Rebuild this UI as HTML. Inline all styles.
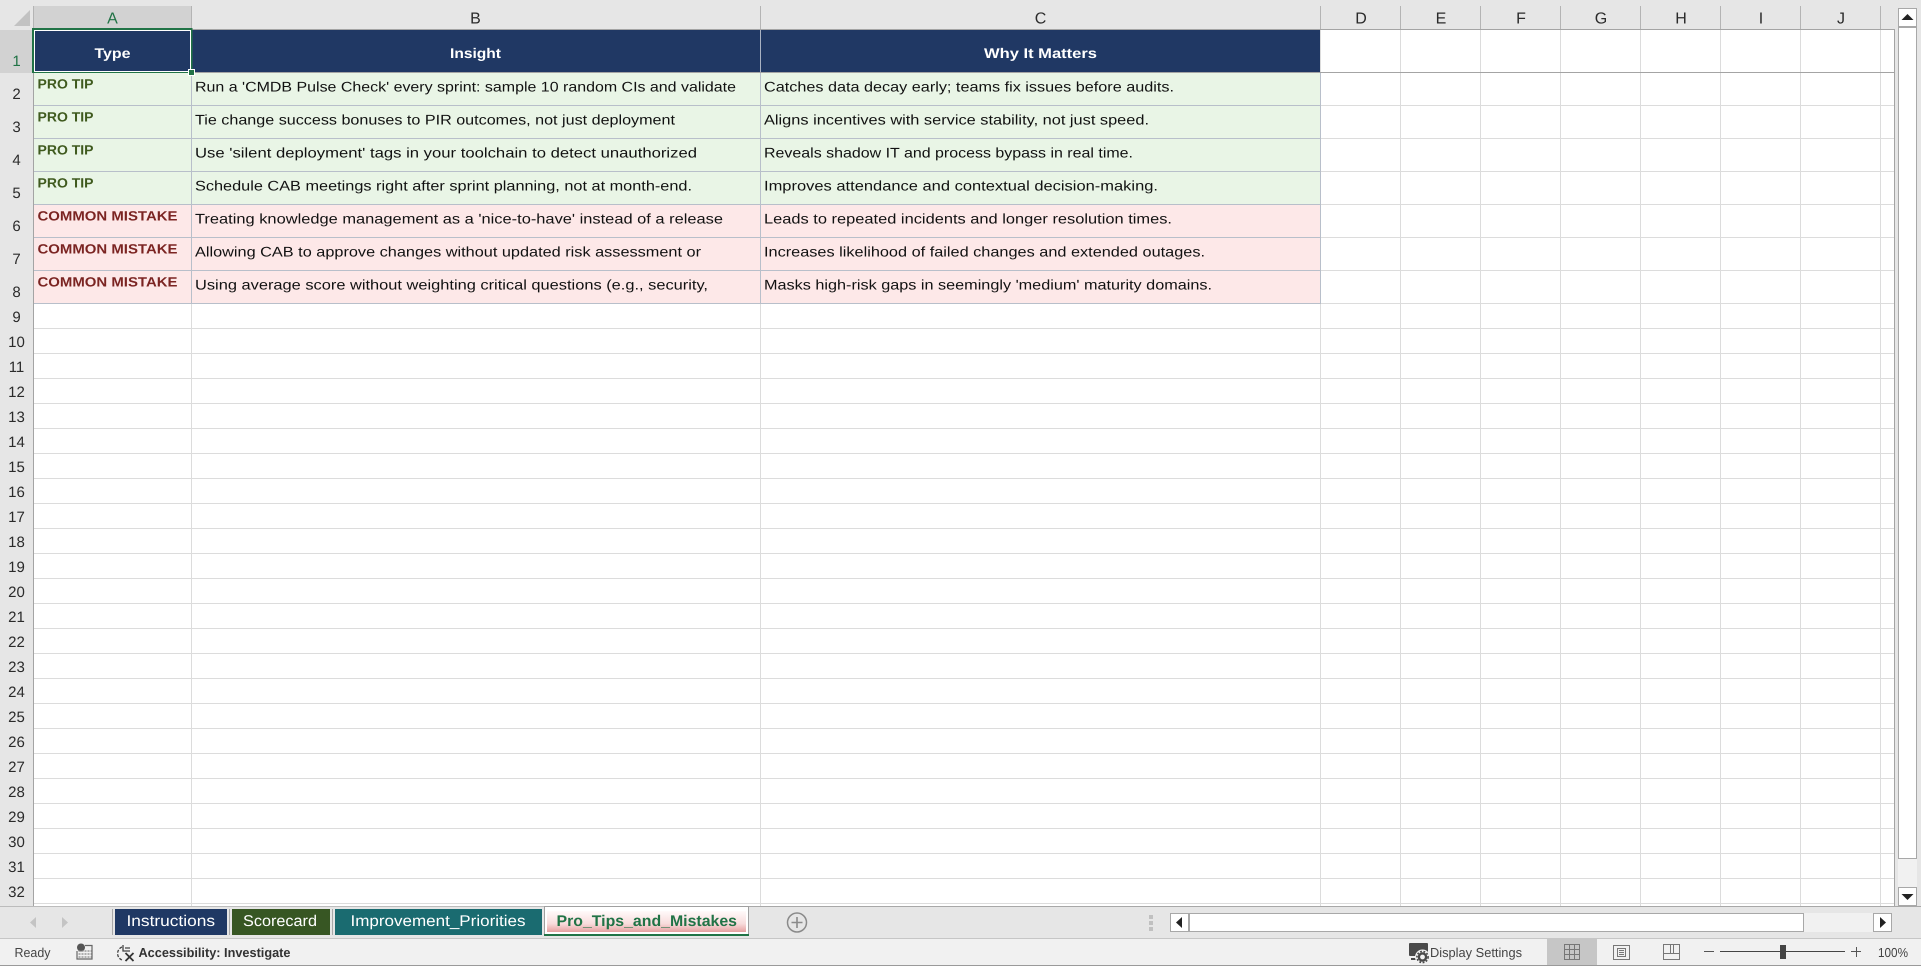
<!DOCTYPE html>
<html lang="en"><head><meta charset="utf-8"><title>Pro_Tips_and_Mistakes</title>
<style>
html,body{margin:0;padding:0;background:#fff;width:1921px;height:966px;overflow:hidden}
svg{display:block}
text{font-family:"Liberation Sans",sans-serif;text-rendering:geometricPrecision}
.h{font-size:14px;font-weight:bold;fill:#fff}
.t{font-size:14px;fill:#111}
.g{font-size:13.5px;font-weight:bold;fill:#3f5a1e}
.m{font-size:13.5px;font-weight:bold;fill:#7b2422}
.r{font-size:15px;fill:#2b2b2b;text-anchor:middle}
.c{font-size:16px;fill:#2b2b2b;text-anchor:middle}
.tab{font-size:15.5px;fill:#fff}
.s{font-size:13px;fill:#444}
</style></head><body>
<svg xmlns="http://www.w3.org/2000/svg" width="1921" height="966" viewBox="0 0 1921 966">
<defs>
<pattern id="hl" patternUnits="userSpaceOnUse" x="0" y="304" width="10" height="25"><rect x="0" y="24" width="10" height="1" fill="#dcdcdc"/></pattern>
<linearGradient id="tg" x1="0" y1="0" x2="0" y2="1"><stop offset="0" stop-color="#fffafa"/><stop offset=".6" stop-color="#f8dcdc"/><stop offset="1" stop-color="#e6a0a0"/></linearGradient>
</defs>
<g shape-rendering="crispEdges">
<rect width="1921" height="966" fill="#fff"/>
<!-- top header -->
<rect x="0" y="0" width="1921" height="29" fill="#e6e6e6"/>
<rect x="0" y="29" width="33" height="878" fill="#e6e6e6"/>
<rect x="33" y="6" width="159" height="23" fill="#d2d2d2"/>
<rect x="0" y="30" width="33" height="43" fill="#d2d2d2"/>
<!-- column ticks -->
<g fill="#b4b4b4">
<rect x="33" y="6" width="1" height="23"/><rect x="191" y="6" width="1" height="23"/><rect x="760" y="6" width="1" height="23"/>
<rect x="1320" y="6" width="1" height="23"/><rect x="1400" y="6" width="1" height="23"/><rect x="1480" y="6" width="1" height="23"/>
<rect x="1560" y="6" width="1" height="23"/><rect x="1640" y="6" width="1" height="23"/><rect x="1720" y="6" width="1" height="23"/>
<rect x="1800" y="6" width="1" height="23"/><rect x="1880" y="6" width="1" height="23"/>
</g>
<!-- white grid lines -->
<rect x="34" y="304" width="1860" height="600" fill="url(#hl)"/>
<g fill="#dcdcdc">
<rect x="1321" y="105" width="573" height="1"/><rect x="1321" y="138" width="573" height="1"/><rect x="1321" y="171" width="573" height="1"/>
<rect x="1321" y="204" width="573" height="1"/><rect x="1321" y="237" width="573" height="1"/><rect x="1321" y="270" width="573" height="1"/><rect x="1321" y="303" width="573" height="1"/>
<rect x="191" y="304" width="1" height="603"/><rect x="760" y="304" width="1" height="603"/>
<rect x="1320" y="30" width="1" height="877"/><rect x="1400" y="30" width="1" height="877"/><rect x="1480" y="30" width="1" height="877"/>
<rect x="1560" y="30" width="1" height="877"/><rect x="1640" y="30" width="1" height="877"/><rect x="1720" y="30" width="1" height="877"/>
<rect x="1800" y="30" width="1" height="877"/><rect x="1880" y="30" width="1" height="877"/>
</g>
<!-- filled cells -->
<rect x="34" y="30" width="1286" height="42" fill="#203864"/>
<rect x="34" y="73" width="1286" height="131" fill="#e9f5e6"/>
<rect x="34" y="205" width="1286" height="98" fill="#fde8e8"/>
<g fill="#b8bfca">
<rect x="34" y="105" width="1287" height="1"/><rect x="34" y="138" width="1287" height="1"/><rect x="34" y="171" width="1287" height="1"/>
<rect x="34" y="204" width="1287" height="1"/><rect x="34" y="237" width="1287" height="1"/><rect x="34" y="270" width="1287" height="1"/><rect x="34" y="303" width="1287" height="1"/>
<rect x="191" y="73" width="1" height="231"/><rect x="760" y="73" width="1" height="231"/><rect x="1320" y="73" width="1" height="231"/>
</g>
<rect x="760" y="30" width="1" height="42" fill="#a9b2c2"/><rect x="191" y="30" width="1" height="42" fill="#a9b2c2"/>
<!-- pane borders -->
<g fill="#a4a4a4">
<rect x="33" y="29" width="1861" height="1"/>
<rect x="33" y="72" width="1861" height="1"/>
<rect x="33" y="29" width="1" height="878"/>
<rect x="1894" y="29" width="1" height="878"/>
</g>
<!-- selection -->
<rect x="33" y="29" width="158.5" height="43" fill="none" stroke="#217346" stroke-width="2"/>
<rect x="34.5" y="30.5" width="156" height="41" fill="none" stroke="#fff" stroke-width="1"/>
<rect x="188" y="69" width="7" height="7" fill="#fff"/><rect x="189" y="70" width="5" height="5" fill="#217346"/>
</g>
<polygon points="30,10 30,26 14,26" fill="#c2c2c2"/>
<!-- column letters -->
<text class="c" x="112.5" y="23.5" style="fill:#217346">A</text>
<text class="c" x="475.5" y="23.5">B</text><text class="c" x="1040.5" y="23.5">C</text><text class="c" x="1361" y="23.5">D</text><text class="c" x="1441" y="23.5">E</text>
<text class="c" x="1521" y="23.5">F</text><text class="c" x="1601" y="23.5">G</text><text class="c" x="1681" y="23.5">H</text><text class="c" x="1761" y="23.5">I</text><text class="c" x="1841" y="23.5">J</text>
<!-- row numbers -->
<text class="r" x="16.5" y="66" style="fill:#217346">1</text>
<text class="r" x="16.5" y="99">2</text><text class="r" x="16.5" y="132">3</text><text class="r" x="16.5" y="165">4</text><text class="r" x="16.5" y="198">5</text>
<text class="r" x="16.5" y="231">6</text><text class="r" x="16.5" y="264">7</text><text class="r" x="16.5" y="297">8</text>
<text class="r" x="16.5" y="322">9</text><text class="r" x="16.5" y="347">10</text><text class="r" x="16.5" y="372">11</text><text class="r" x="16.5" y="397">12</text>
<text class="r" x="16.5" y="422">13</text><text class="r" x="16.5" y="447">14</text><text class="r" x="16.5" y="472">15</text><text class="r" x="16.5" y="497">16</text>
<text class="r" x="16.5" y="522">17</text><text class="r" x="16.5" y="547">18</text><text class="r" x="16.5" y="572">19</text><text class="r" x="16.5" y="597">20</text>
<text class="r" x="16.5" y="622">21</text><text class="r" x="16.5" y="647">22</text><text class="r" x="16.5" y="672">23</text><text class="r" x="16.5" y="697">24</text>
<text class="r" x="16.5" y="722">25</text><text class="r" x="16.5" y="747">26</text><text class="r" x="16.5" y="772">27</text><text class="r" x="16.5" y="797">28</text>
<text class="r" x="16.5" y="822">29</text><text class="r" x="16.5" y="847">30</text><text class="r" x="16.5" y="872">31</text><text class="r" x="16.5" y="897">32</text>
<!-- header cells -->
<text class="h" x="94.5" y="58" textLength="36" lengthAdjust="spacingAndGlyphs">Type</text>
<text class="h" x="450" y="58" textLength="51" lengthAdjust="spacingAndGlyphs">Insight</text>
<text class="h" x="984" y="58" textLength="113" lengthAdjust="spacingAndGlyphs">Why It Matters</text>
<!-- type column -->
<text class="g" x="37.5" y="88.5" textLength="56" lengthAdjust="spacingAndGlyphs">PRO TIP</text>
<text class="g" x="37.5" y="121.5" textLength="56" lengthAdjust="spacingAndGlyphs">PRO TIP</text>
<text class="g" x="37.5" y="154.5" textLength="56" lengthAdjust="spacingAndGlyphs">PRO TIP</text>
<text class="g" x="37.5" y="187.5" textLength="56" lengthAdjust="spacingAndGlyphs">PRO TIP</text>
<text class="m" x="37.5" y="220.5" textLength="140" lengthAdjust="spacingAndGlyphs">COMMON MISTAKE</text>
<text class="m" x="37.5" y="253.5" textLength="140" lengthAdjust="spacingAndGlyphs">COMMON MISTAKE</text>
<text class="m" x="37.5" y="286.5" textLength="140" lengthAdjust="spacingAndGlyphs">COMMON MISTAKE</text>
<!-- insight column -->
<text class="t" x="195" y="91.5" textLength="541" lengthAdjust="spacingAndGlyphs">Run a 'CMDB Pulse Check' every sprint: sample 10 random CIs and validate</text>
<text class="t" x="195" y="124.5" textLength="480" lengthAdjust="spacingAndGlyphs">Tie change success bonuses to PIR outcomes, not just deployment</text>
<text class="t" x="195" y="157.5" textLength="502" lengthAdjust="spacingAndGlyphs">Use 'silent deployment' tags in your toolchain to detect unauthorized</text>
<text class="t" x="195" y="190.5" textLength="497" lengthAdjust="spacingAndGlyphs">Schedule CAB meetings right after sprint planning, not at month-end.</text>
<text class="t" x="195" y="223.5" textLength="528" lengthAdjust="spacingAndGlyphs">Treating knowledge management as a 'nice-to-have' instead of a release</text>
<text class="t" x="195" y="256.5" textLength="506" lengthAdjust="spacingAndGlyphs">Allowing CAB to approve changes without updated risk assessment or</text>
<text class="t" x="195" y="289.5" textLength="513" lengthAdjust="spacingAndGlyphs">Using average score without weighting critical questions (e.g., security,</text>
<!-- why column -->
<text class="t" x="764" y="91.5" textLength="410" lengthAdjust="spacingAndGlyphs">Catches data decay early; teams fix issues before audits.</text>
<text class="t" x="764" y="124.5" textLength="385" lengthAdjust="spacingAndGlyphs">Aligns incentives with service stability, not just speed.</text>
<text class="t" x="764" y="157.5" textLength="369" lengthAdjust="spacingAndGlyphs">Reveals shadow IT and process bypass in real time.</text>
<text class="t" x="764" y="190.5" textLength="394" lengthAdjust="spacingAndGlyphs">Improves attendance and contextual decision-making.</text>
<text class="t" x="764" y="223.5" textLength="408" lengthAdjust="spacingAndGlyphs">Leads to repeated incidents and longer resolution times.</text>
<text class="t" x="764" y="256.5" textLength="441" lengthAdjust="spacingAndGlyphs">Increases likelihood of failed changes and extended outages.</text>
<text class="t" x="764" y="289.5" textLength="448" lengthAdjust="spacingAndGlyphs">Masks high-risk gaps in seemingly 'medium' maturity domains.</text>
<!-- vertical scrollbar -->
<g shape-rendering="crispEdges">
<rect x="1895" y="0" width="26" height="907" fill="#e6e6e6"/>
<rect x="1898" y="27" width="19" height="860" fill="#f1f1f1"/>
<rect x="1898.5" y="8.5" width="18" height="18" fill="#fff" stroke="#a8a8a8"/>
<rect x="1898.5" y="27.5" width="18" height="831" fill="#fff" stroke="#a8a8a8"/>
<rect x="1898.5" y="887.5" width="18" height="18" fill="#fff" stroke="#a8a8a8"/>
<!-- bottom bars -->
<rect x="0" y="906" width="1921" height="32" fill="#e6e6e6"/>
<rect x="0" y="906" width="1921" height="1" fill="#bcbcbc"/>
<rect x="0" y="938" width="1921" height="1" fill="#c6c6c6"/>
<rect x="0" y="939" width="1921" height="26" fill="#f1f1f1"/>
<rect x="0" y="965" width="1921" height="1" fill="#9a9a9a"/>
<!-- tabs -->
<g fill="#a8a8a8"><rect x="112" y="909" width="1" height="26"/><rect x="229" y="909" width="1" height="26"/><rect x="332" y="909" width="1" height="26"/></g>
<rect x="115" y="909" width="112" height="26" fill="#1f3864"/>
<rect x="232" y="909" width="98" height="26" fill="#375623"/>
<rect x="335" y="909" width="207" height="26" fill="#1a6b70"/>
<rect x="544" y="906" width="205" height="28" fill="#a0a0a0"/>
<rect x="545" y="907" width="203" height="27" fill="#fff"/>
<rect x="547" y="911" width="199" height="21" fill="url(#tg)"/>
<rect x="544" y="934" width="205" height="2" fill="#217346"/>
<rect x="749" y="906" width="1172" height="1" fill="#a8a8a8"/>
</g>
<polygon points="36,917 30,922.5 36,928" fill="#c4c4c4"/><polygon points="62,917 68,922.5 62,928" fill="#c4c4c4"/>
<text class="tab" x="126.5" y="926" textLength="88.5" lengthAdjust="spacingAndGlyphs">Instructions</text>
<text class="tab" x="243" y="926" textLength="74" lengthAdjust="spacingAndGlyphs">Scorecard</text>
<text class="tab" x="350.5" y="926" textLength="175" lengthAdjust="spacingAndGlyphs">Improvement_Priorities</text>
<text class="tab" x="556.5" y="926" textLength="180.5" lengthAdjust="spacingAndGlyphs" style="font-weight:bold;fill:#217346">Pro_Tips_and_Mistakes</text>
<circle cx="797" cy="922.5" r="9.5" fill="none" stroke="#8a8a8a" stroke-width="1.5"/>
<path d="M797 917v11M791.5 922.5h11" stroke="#8a8a8a" stroke-width="1.6" fill="none"/>
<!-- horizontal scrollbar -->
<g shape-rendering="crispEdges">
<rect x="1149" y="915" width="4" height="4" fill="#c0c0c0"/><rect x="1149" y="921" width="4" height="4" fill="#c0c0c0"/><rect x="1149" y="927" width="4" height="4" fill="#c0c0c0"/>
<rect x="1188" y="913" width="704" height="19" fill="#f1f1f1"/>
<rect x="1170.5" y="913.5" width="18" height="18" fill="#fff" stroke="#a8a8a8"/>
<rect x="1189.5" y="913.5" width="614" height="18" fill="#fff" stroke="#a8a8a8"/>
<rect x="1873.5" y="913.5" width="18" height="18" fill="#fff" stroke="#a8a8a8"/>
</g>
<polygon points="1907.5,14 1901.5,20 1913.5,20" fill="#222"/>
<polygon points="1901.5,894 1913.5,894 1907.5,900" fill="#222"/>
<polygon points="1182,917 1176,922.5 1182,928" fill="#222"/>
<polygon points="1880,917 1886,922.5 1880,928" fill="#222"/>
<!-- status bar -->
<text class="s" x="14.5" y="957" textLength="36" lengthAdjust="spacingAndGlyphs">Ready</text>
<circle cx="81" cy="947.5" r="4" fill="#555"/>
<path d="M85 945.5h7v13.5h-15v-8" fill="none" stroke="#666" stroke-width="1.2"/>
<path d="M78.5 951h13M78.5 954h13M78.5 957h13" stroke="#888" stroke-width="1.2" stroke-dasharray="2 1" fill="none"/>
<path d="M122 947a7 7 0 0 0 0 13" fill="none" stroke="#444" stroke-width="1.3" stroke-dasharray="3 1.5"/>
<path d="M123 945v6h7M125 948l5 0" fill="none" stroke="#444" stroke-width="1.3"/>
<path d="M125.5 953l8 8M133.5 953l-8 8" fill="none" stroke="#333" stroke-width="1.8"/>
<text class="s" x="138.5" y="957" textLength="152" lengthAdjust="spacingAndGlyphs" style="font-weight:bold;fill:#333">Accessibility: Investigate</text>
<rect x="1409" y="943" width="19" height="13" rx="1" fill="#4a4a4a"/>
<rect x="1411" y="958" width="7" height="2" fill="#4a4a4a"/>
<circle cx="1422.5" cy="957" r="7.5" fill="#f1f1f1"/>
<circle cx="1422.5" cy="957" r="3.6" fill="#f1f1f1" stroke="#4a4a4a" stroke-width="2.4"/>
<circle cx="1422.5" cy="957" r="5.6" fill="none" stroke="#4a4a4a" stroke-width="1.6" stroke-dasharray="1.8 1.6"/>
<text class="s" x="1430" y="957" textLength="92" lengthAdjust="spacingAndGlyphs">Display Settings</text>
<g shape-rendering="crispEdges">
<rect x="1547" y="939" width="50" height="26" fill="#c6c6c6"/>
<path d="M1564.5 944.5h15v15h-15zM1569.5 944.5v15M1574.5 944.5v15M1564.5 949.5h15M1564.5 954.5h15" fill="none" stroke="#777"/>
<path d="M1613.5 945.5h16v14h-16zM1617.5 948.5h8v8h-8zM1619 950.5h5M1619 952.5h5M1619 954.5h5" fill="none" stroke="#777"/>
<path d="M1663.5 944.5h16v15h-16zM1663.5 953.5h16M1670.5 944.5v9M1673.5 944.5v9" fill="none" stroke="#777"/>
<rect x="1704" y="951" width="10" height="1" fill="#555"/>
<rect x="1720" y="951" width="125" height="1" fill="#444"/>
<rect x="1780" y="945" width="6" height="14" fill="#444"/>
<rect x="1851" y="951" width="10" height="1" fill="#555"/><rect x="1856" y="947" width="1" height="10" fill="#555"/>
</g>
<text class="s" x="1878" y="957" textLength="30" lengthAdjust="spacingAndGlyphs">100%</text>
</svg>
</body></html>
